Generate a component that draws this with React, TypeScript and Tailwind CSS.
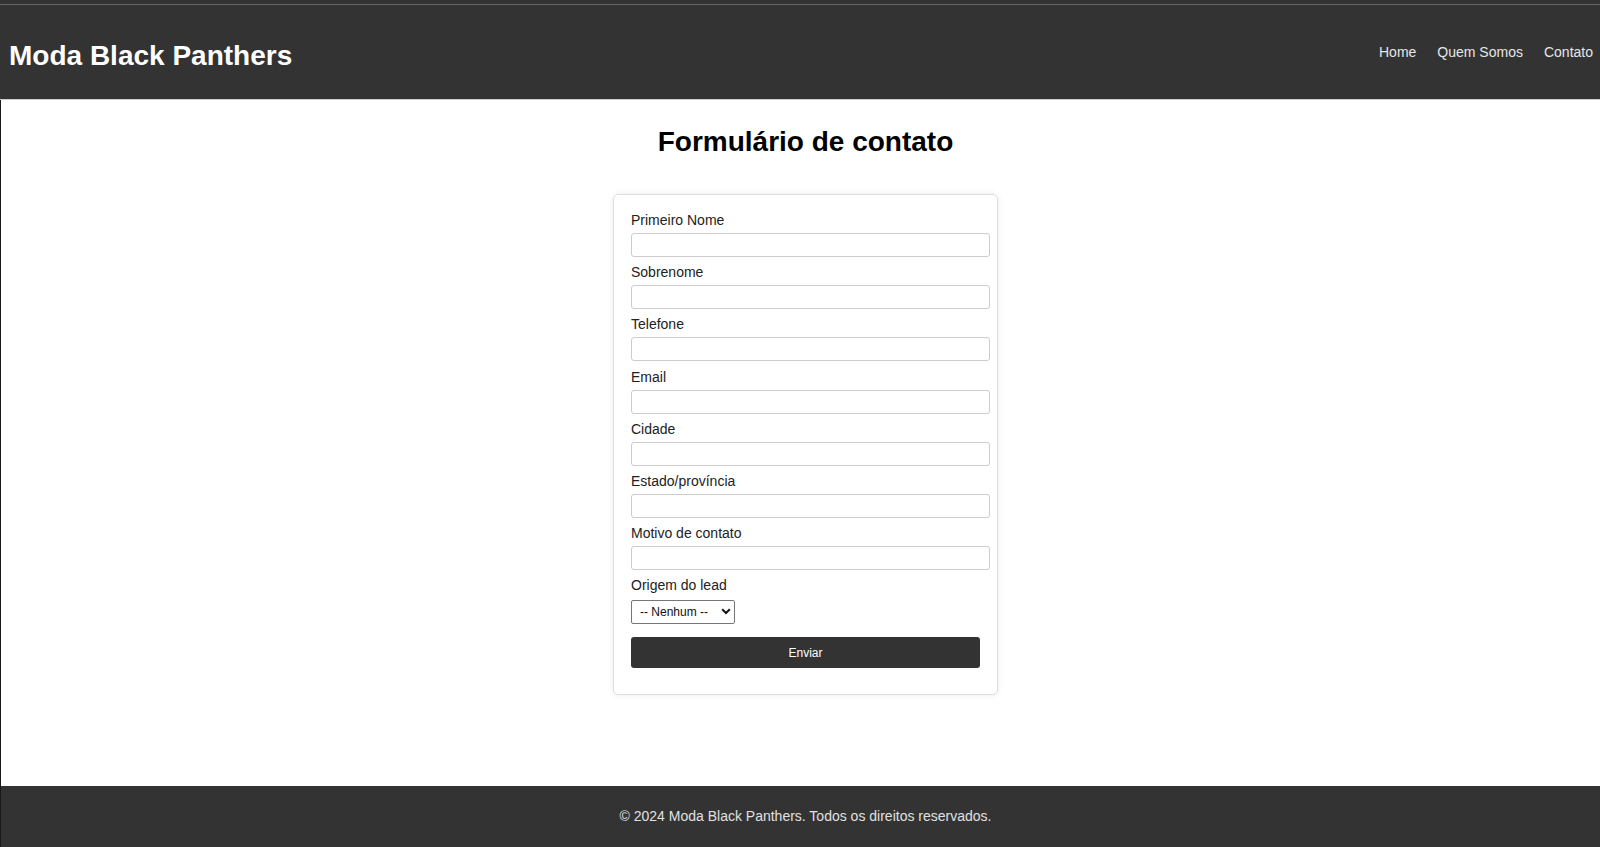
import React from "react";

const fields = [
  "Primeiro Nome",
  "Sobrenome",
  "Telefone",
  "Email",
  "Cidade",
  "Estado/província",
  "Motivo de contato",
];

export default function App() {
  return (
    <div
      className="min-h-[847px] flex flex-col bg-white"
      style={{ fontFamily: '"Liberation Sans", Arial, sans-serif' }}
    >
      <header className="bg-[#333333]">
        <div className="h-[4px]" />
        <div className="h-px bg-[#666666]" />
        <div className="h-[94px] flex items-center justify-between pl-[9px] pr-[7px]">
          <h1 className="mt-[8px] text-[28px] leading-[32px] font-bold text-white">
            Moda Black Panthers
          </h1>
          <nav className="flex gap-[21px] text-[14px] leading-[16px] text-[#e6e6e6]">
            <a href="#">Home</a>
            <a href="#">Quem Somos</a>
            <a href="#">Contato</a>
          </nav>
        </div>
        <div className="h-px bg-[#cccccc]" />
      </header>

      <main className="flex-1 border-l border-[#1a1a1a] pl-[10px] flex flex-col items-center">
        <h2 className="mt-[26px] text-[28px] leading-[32px] font-bold text-black">
          Formulário de contato
        </h2>
        <form
          className="mt-[36px] w-[385px] border border-[#dddddd] rounded-[5px] px-[17px] pt-[17px] pb-[16px] shadow-[0_0_6px_rgba(0,0,0,0.08)]"
          onSubmit={(e) => e.preventDefault()}
        >
          {fields.map((f) => (
            <div key={f} className="mb-[7.2px]">
              <label className="block text-[14px] leading-[16px] text-[#222222] mb-[5px]">
                {f}
              </label>
              <input
                type="text"
                className="block w-[359px] h-[24px] border border-[#cccccc] rounded-[3px] px-[4px] text-[13px] outline-none"
              />
            </div>
          ))}
          <label className="block text-[14px] leading-[16px] text-[#222222] mb-[6px]">
            Origem do lead
          </label>
          <div className="relative w-[104px] h-[24px]">
            <select className="appearance-none w-[104px] h-[24px] border border-[#767676] rounded-[2px] bg-white pl-[8px] text-[12px] text-[#111111] outline-none">
              <option>-- Nenhum --</option>
            </select>
            <svg
              className="absolute right-[4px] top-[9px] pointer-events-none"
              width="10"
              height="7"
              viewBox="0 0 10 7"
            >
              <path d="M1.2 1.2 L5 5 L8.8 1.2" fill="none" stroke="#111" strokeWidth="2" />
            </svg>
          </div>
          <button
            type="submit"
            className="mt-[14px] mb-[10px] block w-full h-[31px] bg-[#333333] text-white text-[12px] rounded-[3px]"
          >
            Enviar
          </button>
        </form>
      </main>

      <footer className="h-[61px] bg-[#333333] border-l border-[#1a1a1a] pl-[10px] flex justify-center pt-[22px]">
        <p className="text-[14px] leading-[16px] text-[#e0e0e0]">
          © 2024 Moda Black Panthers. Todos os direitos reservados.
        </p>
      </footer>
    </div>
  );
}
